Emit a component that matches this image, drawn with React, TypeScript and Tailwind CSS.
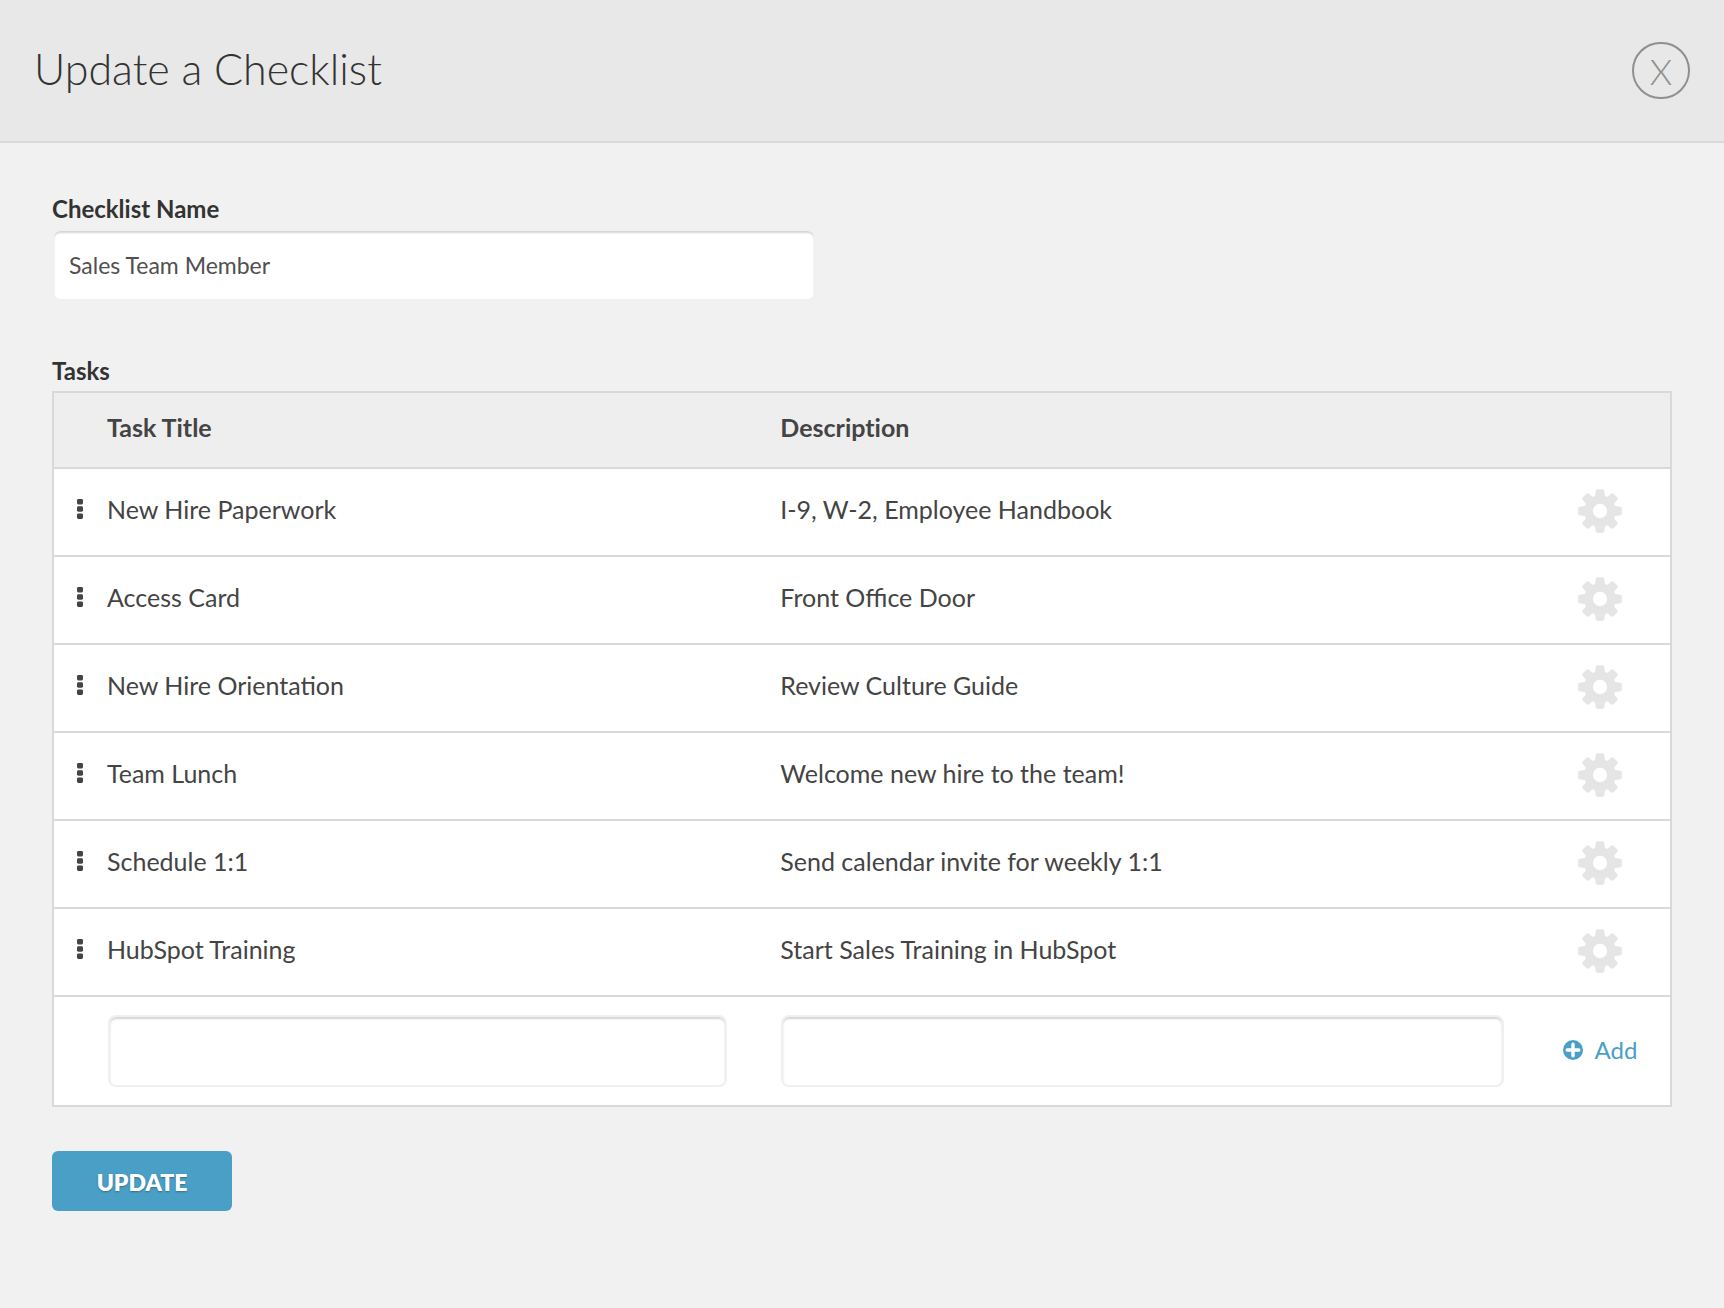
import React, { useState } from 'react';

interface Task {
  id: number;
  title: string;
  description: string;
}

const INITIAL_TASKS: Task[] = [
  { id: 1, title: 'New Hire Paperwork', description: 'I-9, W-2, Employee Handbook' },
  { id: 2, title: 'Access Card', description: 'Front Office Door' },
  { id: 3, title: 'New Hire Orientation', description: 'Review Culture Guide' },
  { id: 4, title: 'Team Lunch', description: 'Welcome new hire to the team!' },
  { id: 5, title: 'Schedule 1:1', description: 'Send calendar invite for weekly 1:1' },
  { id: 6, title: 'HubSpot Training', description: 'Start Sales Training in HubSpot' },
];

const GEAR_ANGLES = [0, 45, 90, 135, 180, 225, 270, 315];

function GearIcon() {
  return (
    <svg viewBox="0 0 44 44" className="w-11 h-11" fill="#e5e5e5" aria-hidden="true">
      <circle cx="22" cy="22" r="11.5" fill="none" stroke="#e5e5e5" strokeWidth="8.6" />
      {GEAR_ANGLES.map((angle) => (
        <path
          key={angle}
          d="M16 9 L17.1 6.6 L17.8 1.6 Q18 0.2 19.4 0.2 H24.6 Q26 0.2 26.2 1.6 L26.9 6.6 L28 9 Z"
          transform={`rotate(${angle} 22 22)`}
        />
      ))}
    </svg>
  );
}

function DragIcon() {
  return (
    <svg viewBox="0 0 6 20" className="w-[6px] h-5" fill="#444444" aria-hidden="true">
      <rect x="0" y="0" width="6" height="5.4" rx="1.4" />
      <rect x="0" y="7.3" width="6" height="5.4" rx="1.4" />
      <rect x="0" y="14.6" width="6" height="5.4" rx="1.4" />
    </svg>
  );
}

function PlusIcon() {
  return (
    <svg viewBox="0 0 20 20" className="w-5 h-5" aria-hidden="true">
      <circle cx="10" cy="10" r="10" fill="#4a9fc6" />
      <path d="M10 4.2 V15.8 M4.2 10 H15.8" stroke="#ffffff" strokeWidth="3.4" strokeLinecap="round" />
    </svg>
  );
}

export default function App() {
  const [name, setName] = useState('Sales Team Member');
  const [tasks, setTasks] = useState<Task[]>(INITIAL_TASKS);
  const [title, setTitle] = useState('');
  const [description, setDescription] = useState('');

  const handleAdd = () => {
    if (!title.trim()) return;
    setTasks([...tasks, { id: Date.now(), title: title.trim(), description: description.trim() }]);
    setTitle('');
    setDescription('');
  };

  const handleSubmit = (e: React.FormEvent) => {
    e.preventDefault();
  };

  return (
    <div className="min-h-screen bg-[#f1f1f1] font-['Lato',sans-serif] text-[#444444]">
      {/* Header */}
      <header className="flex items-center justify-between px-[34px] h-[143px] bg-[#e8e8e8] border-b-2 border-[#d9d9d9]">
        <h1 className="pb-1 text-[43px] leading-[52px] font-light text-[#333333]">Update a Checklist</h1>
        <button
          type="button"
          aria-label="Close"
          className="flex items-center justify-center w-[58px] h-[57px] rounded-full border-2 border-[#8f8f8f] text-[#8f8f8f] text-[36px] leading-[40px] font-light"
        >
          X
        </button>
      </header>

      <form onSubmit={handleSubmit} className="px-[52px] pt-[50px] pb-24">
        {/* Checklist name */}
        <label htmlFor="checklist-name" className="block text-[24px] leading-8 font-bold text-[#333333]">
          Checklist Name
        </label>
        <input
          id="checklist-name"
          type="text"
          value={name}
          onChange={(e) => setName(e.target.value)}
          className="block w-full max-w-[764px] h-[72px] mt-1 px-[15px] bg-white border-2 border-[#f0f0f0] rounded-lg shadow-[inset_0_2px_2px_#d4d4d4] text-[23px] text-[#505050] focus:outline-none"
        />

        {/* Tasks */}
        <h2 className="mt-[54px] text-[24px] leading-8 font-bold text-[#333333]">Tasks</h2>
        <table className="w-full mt-1 table-fixed border-separate border-spacing-0 border-2 border-[#d9d9d9] bg-white text-[25px] leading-8 text-left">
          <thead>
            <tr className="h-[74px] bg-[#eeeeee] [font-variant-ligatures:none]">
              <th className="w-[53px]" aria-label="Reorder" />
              <th className="w-5/12 p-0 pb-1.5 font-bold">Task Title</th>
              <th className="p-0 pb-1.5 font-bold">Description</th>
              <th className="w-[140px]" aria-label="Actions" />
            </tr>
          </thead>
          <tbody>
            {tasks.map((task) => (
              <tr key={task.id} className="h-[88px]">
                <td className="p-0 pr-0.5 pb-1.5 border-t-2 border-[#d9d9d9]">
                  <div className="flex justify-center cursor-move">
                    <DragIcon />
                  </div>
                </td>
                <td className="p-0 pb-1.5 border-t-2 border-[#d9d9d9]">{task.title}</td>
                <td className="p-0 pb-1.5 border-t-2 border-[#d9d9d9]">{task.description}</td>
                <td className="p-0 pb-0.5 border-t-2 border-[#d9d9d9]">
                  <button type="button" aria-label={`Edit ${task.title}`} className="block mx-auto">
                    <GearIcon />
                  </button>
                </td>
              </tr>
            ))}
            <tr className="h-[110px]">
              <td className="p-0 border-t-2 border-[#d9d9d9]" />
              <td className="p-0 pl-px pr-[53px] border-t-2 border-[#d9d9d9]">
                <input
                  type="text"
                  aria-label="Task Title"
                  value={title}
                  onChange={(e) => setTitle(e.target.value)}
                  className="block w-full h-[72px] px-[15px] bg-white border-2 border-[#f0f0f0] rounded-lg shadow-[inset_0_2px_2px_#d4d4d4] text-[23px] text-[#505050] focus:outline-none"
                />
              </td>
              <td className="p-0 pl-px pr-[26px] border-t-2 border-[#d9d9d9]">
                <input
                  type="text"
                  aria-label="Description"
                  value={description}
                  onChange={(e) => setDescription(e.target.value)}
                  className="block w-full h-[72px] px-[15px] bg-white border-2 border-[#f0f0f0] rounded-lg shadow-[inset_0_2px_2px_#d4d4d4] text-[23px] text-[#505050] focus:outline-none"
                />
              </td>
              <td className="p-0 pb-0.5 border-t-2 border-[#d9d9d9]">
                <button
                  type="button"
                  onClick={handleAdd}
                  className="flex items-center gap-3 mx-auto text-[24px] leading-8 text-[#4a9fc6]"
                >
                  <PlusIcon />
                  Add
                </button>
              </td>
            </tr>
          </tbody>
        </table>

        <button
          type="submit"
          className="block w-[180px] h-[60px] mt-11 pt-0.5 rounded-md bg-[#4a9fc6] text-white text-[23px] leading-8 font-extrabold [text-shadow:0_1px_2px_rgba(0,0,0,0.3)]"
        >
          UPDATE
        </button>
      </form>
    </div>
  );
}
